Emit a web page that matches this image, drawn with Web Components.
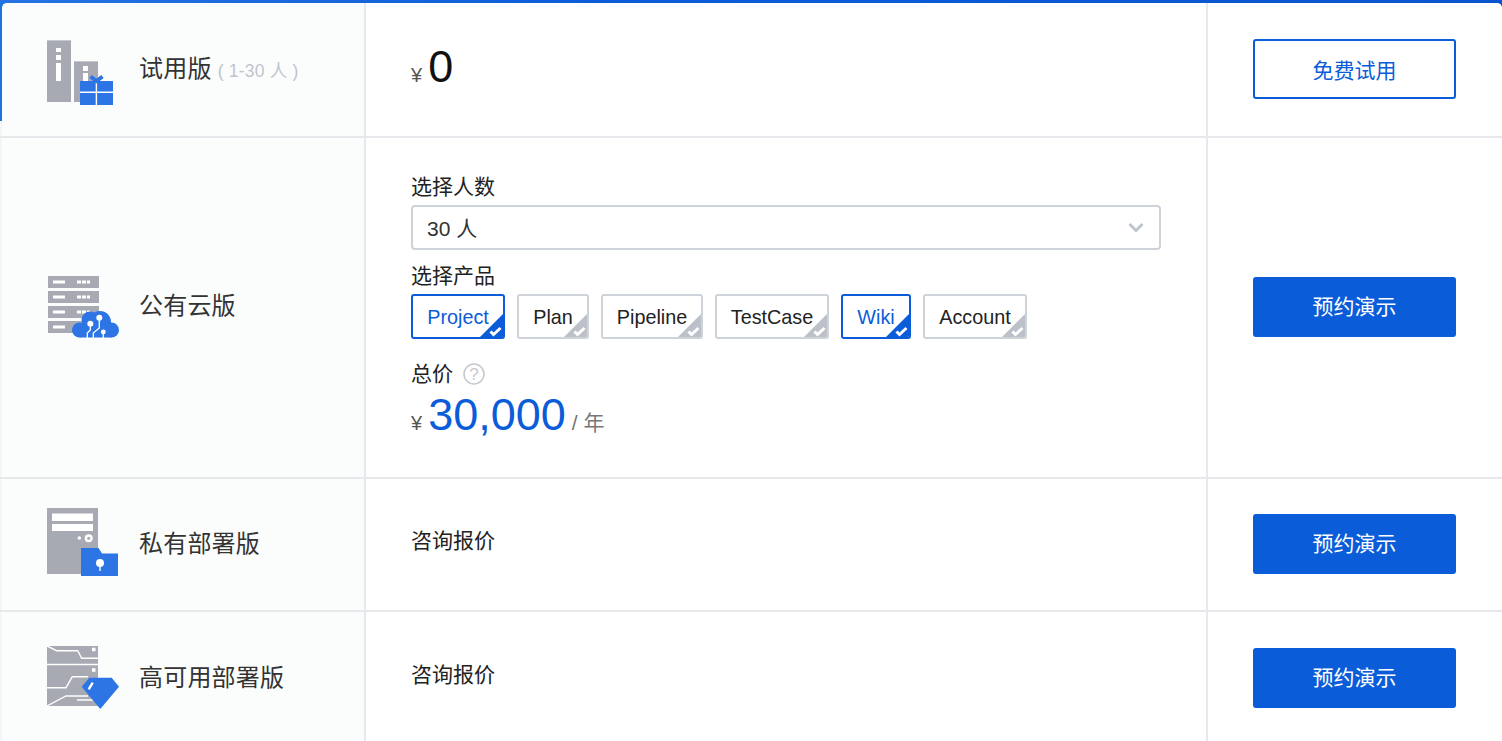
<!DOCTYPE html>
<html><head><meta charset="utf-8">
<style>
html,body{margin:0;padding:0;background:#fff;height:741px;overflow:hidden}
body{font-family:"Liberation Sans","Noto Sans CJK SC",sans-serif;color:#222}
</style></head><body>
<template id="t-table">
<style>:host{display:block;height:741px;overflow:hidden;position:relative;background:#fff;border-top:3px solid;border-image:linear-gradient(to right,#2673e2,#0b5cd9 40%,#0a55cf) 1;box-sizing:border-box}
.edge{position:absolute;left:0;top:0;width:2px;height:118px;background:#2273e0;z-index:1}
.c{position:absolute;top:0;width:4px;height:4px;z-index:1}
.tl{left:2px;background:radial-gradient(circle at 100% 100%,transparent 3.4px,#2273e0 4px)}
.tr{right:0;background:radial-gradient(circle at 0 100%,transparent 3.4px,#0a55cf 4px)}</style>
<div class="edge"></div><div class="c tl"></div><div class="c tr"></div><slot></slot>
</template>
<template id="t-row">
<style>:host{display:grid;grid-template-columns:364px 2px 840px 2px 294px;border-bottom:2px solid #e6e8ec;box-sizing:border-box}
.l{background:#fbfdfd;border-left:2px solid #f4f5f6;display:flex;align-items:center;box-sizing:border-box;padding-left:45px}
.ic{width:92px;flex:none;display:flex}
.name{font-size:24px;color:#333;white-space:nowrap;letter-spacing:.2px;margin-bottom:var(--nb,0)}
.sep{background:#e6e8ec}
.m{padding-left:45px;display:flex;flex-direction:column;justify-content:center;box-sizing:border-box}
.r{display:flex;align-items:center;padding:0 0 2px 45px}
</style>
<div class="l"><div class="ic"><slot name="icon"></slot></div><div class="name"><slot name="name"></slot></div></div>
<div class="sep"></div><div class="m"><slot></slot></div><div class="sep"></div>
<div class="r"><slot name="action"></slot></div>
</template>
<template id="t-btn">
<style>:host{display:flex;width:203px;height:60px;align-items:center;justify-content:center;box-sizing:border-box;border-radius:3px;font-size:21px;background:#0b5cd9;color:#fff;border:2px solid #0b5cd9;padding-bottom:4px}
:host([outline]){background:#fff;color:#0b5cd9;padding-bottom:0}</style><slot></slot>
</template>
<template id="t-tag">
<style>:host{display:block;position:relative;height:45px;box-sizing:border-box;border:2px solid #ced2d9;border-radius:3px;text-align:center;font-size:19.8px;line-height:43px;color:#222;overflow:hidden;background:#fff;white-space:nowrap}
:host([on]){border-color:#0b5cd9;color:#0b5cd9}
svg{position:absolute;right:0;bottom:0;width:23px;height:23px}
.bg{fill:#bcc0c8}:host([on]) .bg{fill:#0b5cd9}</style>
<slot></slot><svg viewBox="0 0 23 23"><path class="bg" d="M23 0V23H0Z"/><path d="M10.500 17.500l3 3 7-6.500" fill="none" stroke="#fff" stroke-width="3"/></svg>
</template>
<template id="t-select">
<style>:host{display:flex;align-items:center;justify-content:space-between;width:750px;height:45px;box-sizing:border-box;border:2px solid #ced2d9;border-radius:4px;padding:0 15px 2px 14px;font-size:21px;color:#333}
svg{width:16px;height:11px;margin-top:2px}</style>
<slot></slot><svg viewBox="0 0 16 11"><path d="M1.500 2L8 8.500 14.500 2" fill="none" stroke="#bfc3cb" stroke-width="3"/></svg>
</template>
<template id="t-price">
<style>:host{display:flex;align-items:baseline;white-space:nowrap;color:#666;font-size:20px}
.y{font-size:20px;margin-right:6px;color:#555}
.n{font-size:45px;color:var(--c,#111);line-height:54px}
.u{margin-left:6px;color:#777;font-size:21px}</style>
<span class="y">¥</span><span class="n"><slot></slot></span><span class="u"><slot name="unit"></slot></span>
</template>
<template id="t-form">
<style>:host{display:block;font-size:21px;color:#222}
.lb{line-height:28px;height:28px;display:flex;align-items:center}
.tags{display:flex;gap:12px}
.a{margin-bottom:12px}.b{margin-bottom:21px}
.t{display:flex;align-items:center;gap:10px}
svg{width:22px;height:22px}</style>
<div class="lb" style="margin-bottom:4px">选择人数</div>
<div class="a"><slot name="select"></slot></div>
<div class="lb" style="margin-bottom:4px">选择产品</div>
<div class="tags b"><slot name="tags"></slot></div>
<div class="lb t">总价<svg viewBox="0 0 22 22"><circle cx="11" cy="11" r="10" fill="none" stroke="#c4c8cf" stroke-width="1.500"/><text x="11" y="17" text-anchor="middle" font-size="17" fill="#c4c8cf" font-family="Liberation Sans">?</text></svg></div>
<slot name="price"></slot>
</template>
<p-table>
 <p-row style="height:135px;--nb:6px">
  <svg slot="icon" width="68" height="66" viewBox="0 0 68 66" style="margin-top:7px"><path fill="#a7aab3" d="M0 0h24v62H0z"/><path fill="#c4c7cd" d="M0 0h24v1H0z"/><path fill="#fff" d="M9 8h5v4H9zM9 15h5v5H9zM9 23h5v18H9z"/><path fill="#a7aab3" d="M27 21h24v41H27z"/><path fill="#c4c7cd" d="M27 21h24v1H27z"/><path fill="#fff" d="M36 26h5v5h-5zM36 33h5v8h-5z"/><path fill="#2d74e4" d="M33 41h33v24H33z"/><path fill="#fff" d="M48.700 41h1.400v24h-1.400zM33 51.500h33v1.500H33z"/><path fill="none" stroke="#2d74e4" stroke-width="4" d="M43.500 36.500L49.500 41l6-4.500"/></svg>
  <span slot="name">试用版<small style="font-size:17.5px;color:#c0c4cc;margin-left:1px"> ( 1-30 人 )</small></span>
  <p-price style="margin-top:-5px">0</p-price>
  <p-btn outline slot="action">免费试用</p-btn>
 </p-row>
 <p-row style="height:341px;--nb:8px">
  <svg slot="icon" width="72" height="62" viewBox="0 0 72 62" style="margin:-1px 0 0 1px"><path fill="#a7aab3" d="M0 0h51v12H0zM0 15h51v12H0zM0 30h51v12H0zM0 45h51v12H0z"/><path fill="#fff" d="M5 4.500h12v3H5zM5 19.500h12v3H5zM5 34.500h12v3H5zM5 49.500h12v3H5zM29 4.500h4v3h-4zM34 4.500h4v3h-4zM39 4.500h3v3h-3zM29 19.500h4v3h-4zM34 19.500h4v3h-4zM39 19.500h3v3h-3zM29 34.500h4v3h-4zM34 34.500h4v3h-4zM39 34.500h3v3h-3z"/><g fill="#2d74e4"><circle cx="31.500" cy="54" r="7.500"/><circle cx="42" cy="44" r="8.500"/><circle cx="52" cy="46" r="11"/><circle cx="63.500" cy="54" r="7.500"/><path d="M31.500 50h32v11.500h-32z"/></g><g fill="none" stroke="#fff" stroke-width="1.300"><path d="M42.300 48v6l-3 3v5M51.300 42v10l-6 5v5M55.300 56v6"/></g><circle cx="42.300" cy="47.700" r="3" fill="#fff"/><circle cx="51.300" cy="41.700" r="3" fill="#fff"/><circle cx="55.300" cy="56" r="2.400" fill="#fff"/></svg>
  <span slot="name">公有云版</span>
  <p-form>
   <p-select slot="select">30 人</p-select>
   <p-tag slot="tags" on style="width:94px">Project</p-tag><p-tag slot="tags" style="width:72px">Plan</p-tag><p-tag slot="tags" style="width:102px">Pipeline</p-tag><p-tag slot="tags" style="width:114px">TestCase</p-tag><p-tag slot="tags" on style="width:70px">Wiki</p-tag><p-tag slot="tags" style="width:104px">Account</p-tag>
   <p-price slot="price" style="--c:#0b5cd9">30,000<span slot="unit">/ 年</span></p-price>
  </p-form>
  <p-btn slot="action">预约演示</p-btn>
 </p-row>
 <p-row style="height:133px;--nb:6px">
  <svg slot="icon" width="72" height="68" viewBox="0 0 72 68" style="margin-top:-5px"><path fill="#a7aab3" d="M0 0h51v66H0z"/><path fill="#fff" d="M5 5.500h41v7.500H5zM5 16h41v7H5z"/><circle cx="32.300" cy="30" r="1.800" fill="#fff"/><circle cx="41.700" cy="30.300" r="4" fill="#fff"/><circle cx="41.700" cy="30.300" r="1.500" fill="#a7aab3"/><path fill="#2d74e4" d="M34 40h17.500l3.500 5.500h16V68H34z"/><circle cx="53" cy="55" r="4" fill="#fff"/><path fill="#fff" d="M52.300 55h1.400v8h-1.400z"/></svg>
  <span slot="name">私有部署版</span>
  <div style="font-size:21px;margin-top:-12px">咨询报价</div>
  <p-btn slot="action">预约演示</p-btn>
 </p-row>
 <p-row style="height:136px;--nb:8px">
  <svg slot="icon" width="72" height="64" viewBox="0 0 72 64" style="margin-top:-2px"><path fill="#a7aab3" d="M0 0h51v60H0z"/><path fill="none" stroke="#fff" stroke-width="1.400" d="M0 0l9.700 4.700h21l4 7.600H51M0 18.500h51M0 41.700h19l6.300-11H41M0 60l19-10h22M30 54h16"/><path fill="#fff" d="M45 1.700h3.500v3.500H45zM45 22.300h3.500v3.500H45z"/><path fill="#2d74e4" d="M34.700 40.700l7.600-9h22.400l7.300 9L53.300 63z"/><path stroke="#fff" stroke-width="2.400" d="M45.700 36.700l-4 6.600"/></svg>
  <span slot="name">高可用部署版</span>
  <div style="font-size:21px;margin-top:-12px">咨询报价</div>
  <p-btn slot="action">预约演示</p-btn>
 </p-row>
</p-table>
<script>
for(const [tag,id] of [['p-table','t-table'],['p-row','t-row'],['p-btn','t-btn'],['p-tag','t-tag'],['p-select','t-select'],['p-price','t-price'],['p-form','t-form']]){
 customElements.define(tag,class extends HTMLElement{constructor(){super();this.attachShadow({mode:'open'}).append(document.getElementById(id).content.cloneNode(true));}});
}
</script>
</body></html>
